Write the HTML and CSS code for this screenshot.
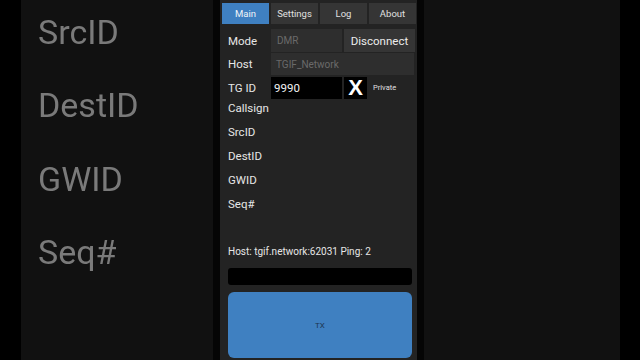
FILE: index.html
```html
<!DOCTYPE html>
<html>
<head>
<meta charset="utf-8">
<link rel="stylesheet" href="styles.css">
</head>
<body>
<div class="frame">
  <div class="edge-left"></div>
  <div class="backdrop">
    <div class="bg-label">SrcID</div>
    <div class="bg-label">DestID</div>
    <div class="bg-label">GWID</div>
    <div class="bg-label">Seq#</div>
  </div>
  <div class="gap"></div>
  <div class="panel">
    <div class="tabs">
      <div class="tab active">Main</div>
      <div class="tab">Settings</div>
      <div class="tab">Log</div>
      <div class="tab">About</div>
    </div>
    <div class="content">
      <div class="row row-mode">
        <div class="label">Mode</div>
        <div class="field field-short">DMR</div>
        <div class="btn">Disconnect</div>
      </div>
      <div class="row row-host">
        <div class="label">Host</div>
        <div class="field field-long">TGIF_Network</div>
      </div>
      <div class="row row-tg">
        <div class="label">TG ID</div>
        <div class="input">9990</div>
        <div class="xbtn">X</div>
        <div class="private">Private</div>
      </div>
      <div class="info">
        <div class="info-row">Callsign</div>
        <div class="info-row">SrcID</div>
        <div class="info-row">DestID</div>
        <div class="info-row">GWID</div>
        <div class="info-row">Seq#</div>
      </div>
      <div class="status">Host: tgif.network:62031 Ping: 2</div>
      <div class="bar"></div>
      <div class="tx">TX</div>
    </div>
  </div>
  <div class="gap"></div>
  <div class="backdrop backdrop-right"></div>
  <div class="edge-right"></div>
</div>
</body>
</html>
```

FILE: styles.css
```css
html, body {
  margin: 0;
  padding: 0;
  background: #000;
}
body {
  width: 640px;
  height: 360px;
  overflow: hidden;
  font-family: Roboto, "Noto Sans", "Liberation Sans", sans-serif;
}
.frame {
  display: flex;
  width: 640px;
  height: 360px;
}
.edge-left { width: 21px; background: #000; }
.edge-right { width: 20px; background: #000; }
.gap { width: 7px; background: #050505; }
.backdrop {
  width: 192px;
  background: #111111;
  overflow: hidden;
  display: flex;
  flex-direction: column;
  padding-top: 12px;
  box-sizing: border-box;
}
.backdrop-right { width: 196px; }
.bg-label {
  height: 73.4px;
  line-height: 40px;
  font-size: 34px;
  color: #7a7a7a;
  padding-left: 17px;
  filter: blur(0.5px);
}
.panel {
  width: 197px;
  background: #232323;
  display: flex;
  flex-direction: column;
  overflow: hidden;
}
.tabs {
  display: flex;
  gap: 2px;
  padding: 3px 1px 0 2px;
  height: 21px;
}
.tab {
  flex: 1;
  background: #353535;
  color: #e0e0e0;
  font-size: 9.5px;
  display: flex;
  align-items: center;
  justify-content: center;
}
.tab.active {
  background: #3f80c1;
  color: #f0f4f8;
}
.content {
  padding: 0 0 0 8px;
  display: flex;
  flex-direction: column;
}
.row {
  display: flex;
  align-items: center;
}
.row-mode { margin-top: 5px; height: 23px; }
.row-host { margin-top: 1px; height: 22px; }
.row-tg { margin-top: 2px; height: 22px; }
.label {
  width: 43px;
  color: #e6e6e6;
  font-size: 11.5px;
}
.field {
  height: 100%;
  background: #2e2e2e;
  color: #6a6a6a;
  font-size: 10px;
  display: flex;
  align-items: center;
  padding-left: 6px;
  box-sizing: border-box;
}
.field-short { width: 71px; }
.field-long { width: 143px; padding-left: 5px; }
.btn {
  margin-left: 2px;
  width: 71px;
  height: 100%;
  background: #353535;
  color: #ececec;
  font-size: 11.5px;
  display: flex;
  align-items: center;
  justify-content: center;
}
.input {
  width: 71px;
  height: 100%;
  background: #000;
  color: #f2f2f2;
  font-size: 11.5px;
  display: flex;
  align-items: center;
  padding-left: 3px;
  box-sizing: border-box;
}
.xbtn {
  margin-left: 2px;
  width: 23px;
  height: 100%;
  background: #000;
  color: #fff;
  font-weight: bold;
  font-size: 22px;
  font-family: "Liberation Sans", Arial, sans-serif;
  display: flex;
  align-items: center;
  justify-content: center;
}
.private {
  margin-left: 6px;
  font-size: 7.5px;
  color: #e0e0e0;
  margin-top: -2px;
}
.info {
  margin-top: -3px;
  display: flex;
  flex-direction: column;
}
.info-row {
  height: 24px;
  line-height: 24px;
  font-size: 11.5px;
  color: #e6e6e6;
}
.status {
  margin-top: 29px;
  height: 14px;
  line-height: 14px;
  font-size: 10px;
  color: #e6e6e6;
}
.bar {
  margin-top: 9px;
  width: 184px;
  height: 17px;
  background: #000;
  border-radius: 3px;
}
.tx {
  margin-top: 7px;
  width: 184px;
  height: 66px;
  background: #3f80c1;
  border-radius: 6px;
  color: #1d3550;
  font-size: 8px;
  display: flex;
  align-items: center;
  justify-content: center;
}
```
